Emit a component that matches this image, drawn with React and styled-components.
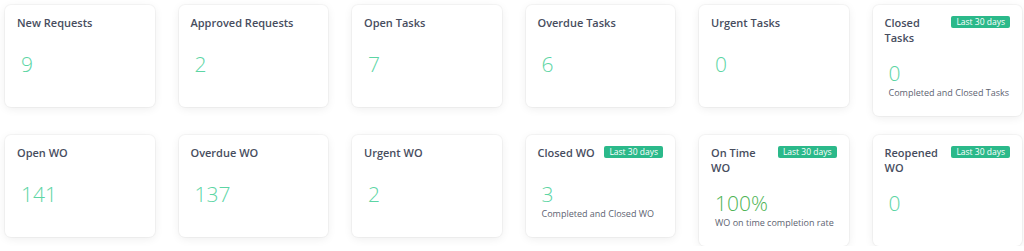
import React from "react";
import styled, { createGlobalStyle } from "styled-components";

const GlobalStyle = createGlobalStyle`
  body {
    margin: 0;
    background: #fff;
    font-family: "Open Sans", "Liberation Sans", sans-serif;
  }
`;

const stats = [
  { title: "New Requests", value: "9" },
  { title: "Approved Requests", value: "2" },
  { title: "Open Tasks", value: "7" },
  { title: "Overdue Tasks", value: "6" },
  { title: "Urgent Tasks", value: "0" },
  { title: "Closed Tasks", value: "0", badge: true, note: "Completed and Closed Tasks" },
  { title: "Open WO", value: "141" },
  { title: "Overdue WO", value: "137" },
  { title: "Urgent WO", value: "2" },
  { title: "Closed WO", value: "3", badge: true, note: "Completed and Closed WO" },
  { title: "On Time WO", value: "100%", badge: true, note: "WO on time completion rate", rate: true },
  { title: "Reopened WO", value: "0", badge: true },
];

const App = () => {
  return (
    <>
      <GlobalStyle />
      <Grid>
        {stats.map((s) => (
          <Card key={s.title}>
            <Header>
              <Title>{s.title}</Title>
              {s.badge && <Badge>Last 30 days</Badge>}
            </Header>
            <Body>
              <Value $rate={s.rate}>{s.value}</Value>
              {s.note && <Note>{s.note}</Note>}
            </Body>
          </Card>
        ))}
      </Grid>
    </>
  );
};

const Grid = styled.div`
  display: grid;
  grid-template-columns: repeat(6, 1fr);
  column-gap: 24px;
  row-gap: 19px;
  align-items: start;
  padding: 5px 2px 0 5px;
`;

const Card = styled.div`
  background: #fff;
  border-radius: 6px;
  box-shadow: 0 0 0 1px rgba(0, 0, 0, 0.03), 0 2px 10px rgba(0, 0, 0, 0.07);
  padding: 11px 12px 12px 12px;
`;

const Header = styled.div`
  display: flex;
  justify-content: space-between;
  align-items: flex-start;
  gap: 6px;
  min-height: 20px;
`;

const Title = styled.div`
  flex: 1;
  font-size: 11px;
  line-height: 14.5px;
  font-weight: 600;
  color: #474d5e;
`;

const Badge = styled.span`
  flex-shrink: 0;
  background: #2bb98a;
  color: #fff;
  font-size: 8.5px;
  line-height: 12px;
  padding: 0 5px;
  border-radius: 2px;
`;

const Body = styled.div`
  box-sizing: border-box;
  min-height: 59px;
  padding: 14px 0 0 4px;
`;

const Value = styled.div`
  font-size: 21px;
  line-height: 28px;
  font-weight: 300;
  color: ${(p) => (p.$rate ? "#4fb455" : "#5cd5a4")};
`;

const Note = styled.div`
  font-size: 9px;
  line-height: 12px;
  color: #5d6371;
`;

export default App;
